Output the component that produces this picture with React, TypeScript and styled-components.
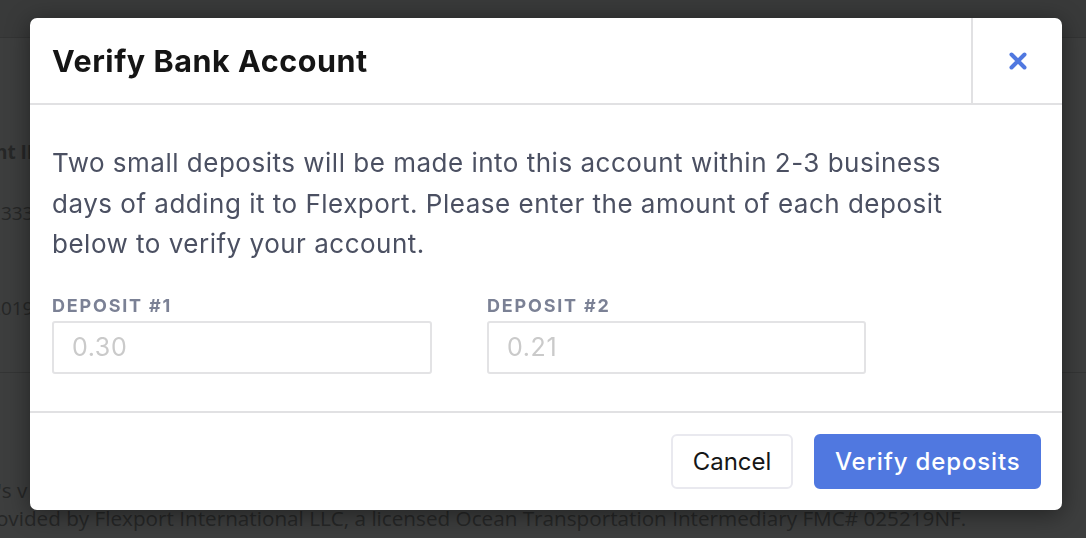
import React from "react"
import styled, { createGlobalStyle } from "styled-components"

const GlobalStyle = createGlobalStyle`
  html, body {
    margin: 0;
    padding: 0;
    height: 100%;
    background: #3d3e3e;
    font-family: Inter, "Noto Sans", sans-serif;
    overflow: hidden;
  }
  * { box-sizing: border-box; }
`

const blue = "#5078e0"

// faded page behind the dialog
const Page = styled.div`
  height: 538px;
  display: flex;
  flex-direction: column;
  color: #262727;
  font-family: "Open Sans", sans-serif;
`
const PageTop = styled.div`
  height: 38px;
  flex-shrink: 0;
  background: #393a3a;
  border-bottom: 1px solid #333434;
`
const Spacer = styled.div<{ height: number }>`
  height: ${p => p.height}px;
  flex-shrink: 0;
`
const PageRow = styled.div<{ bold?: boolean; height: number; shift: number }>`
  height: ${p => p.height}px;
  flex-shrink: 0;
  display: flex;
  align-items: center;
  margin-left: ${p => -p.shift}px;
  font-size: 19px;
  font-weight: ${p => (p.bold ? 700 : 400)};
  white-space: nowrap;
`
const PageRule = styled.div`
  height: 1px;
  flex-shrink: 0;
  background: #343535;
`
const Legal = styled.div<{ shift: number }>`
  margin-left: ${p => -p.shift}px;
  font-size: 20.7px;
  line-height: 28px;
  white-space: nowrap;
`

const Overlay = styled.div`
  position: fixed;
  inset: 0;
  display: flex;
  align-items: flex-start;
  padding: 18px 0 0 30px;
`
const Modal = styled.div`
  width: 1032px;
  height: 492px;
  background: #fff;
  border-radius: 7px;
  box-shadow: 0 4px 24px rgba(0, 0, 0, 0.45);
  display: flex;
  flex-direction: column;
  overflow: hidden;
`
const Header = styled.div`
  height: 87px;
  flex-shrink: 0;
  display: flex;
  border-bottom: 2px solid #e1e1e3;
`
const Title = styled.h1`
  flex: 1;
  margin: 0;
  padding: 0 22px;
  display: flex;
  align-items: center;
  font-size: 30.5px;
  font-weight: 700;
  color: #151515;
  letter-spacing: 0.55px;
`
const Close = styled.button`
  width: 91px;
  border: none;
  border-left: 2px solid #e1e1e3;
  background: none;
  display: flex;
  align-items: center;
  justify-content: center;
  padding: 0;
  cursor: pointer;
`
const Body = styled.div`
  flex: 1;
  padding: 38px 22px 0;
  border-bottom: 2px solid #e1e1e3;
`
const Intro = styled.p`
  margin: 0;
  max-width: 940px;
  font-size: 26px;
  letter-spacing: 0.5px;
  line-height: 40.5px;
  color: #4b5062;
`
const Fields = styled.div`
  display: grid;
  grid-template-columns: 380px 379px;
  column-gap: 55px;
  margin-top: 30px;
`
const Field = styled.label`
  display: flex;
  flex-direction: column;
  gap: 4px;
`
const Label = styled.span`
  font-size: 18px;
  font-weight: 700;
  letter-spacing: 1.8px;
  text-transform: uppercase;
  color: #7b8195;
  line-height: 22px;
`
const Input = styled.input`
  height: 53px;
  border: 2px solid #e3e3e5;
  border-radius: 3px;
  padding: 0 18px;
  font-family: Inter, sans-serif;
  font-size: 25px;
  letter-spacing: 0.6px;
  color: #333;
  outline: none;
  &::placeholder {
    color: #cacaca;
  }
`
const Footer = styled.div`
  height: 97px;
  flex-shrink: 0;
  display: flex;
  justify-content: flex-end;
  align-items: center;
  gap: 21px;
  padding: 0 21px;
`
const Button = styled.button<{ primary?: boolean }>`
  height: 55px;
  padding: 0 ${p => (p.primary ? 18.5 : 20)}px;
  border-radius: 6px;
  font-family: Inter, sans-serif;
  font-size: 24px;
  letter-spacing: ${p => (p.primary ? 0.85 : 0)}px;
  font-weight: ${p => (p.primary ? 500 : 400)};
  border: 2px solid ${p => (p.primary ? blue : "#e9e9ef")};
  background: ${p => (p.primary ? blue : "#fff")};
  color: ${p => (p.primary ? "#fff" : "#161616")};
  cursor: pointer;
`

export default function App() {
  return (
    <>
      <GlobalStyle />
      <Page>
        <PageTop />
        <Spacer height={81} />
        <PageRow height={66} shift={62} bold>
          Account ID
        </PageRow>
        <PageRow height={56} shift={22}>
          A1333
        </PageRow>
        <Spacer height={45} />
        <PageRow height={44} shift={22}>
          A2019
        </PageRow>
        <Spacer height={42} />
        <PageRule />
        <Spacer height={103} />
        <Legal shift={16}>It's v</Legal>
        <Legal shift={25}>
          Provided by Flexport International LLC, a licensed Ocean Transportation Intermediary FMC# 025219NF.
        </Legal>
      </Page>
      <Overlay>
        <Modal>
          <Header>
            <Title>Verify Bank Account</Title>
            <Close aria-label="Close">
              <svg width="20" height="20" viewBox="0 0 20 20">
                <path
                  d="M3.5 3.5 L16.5 16.5 M16.5 3.5 L3.5 16.5"
                  stroke={blue}
                  strokeWidth="4"
                  strokeLinecap="round"
                />
              </svg>
            </Close>
          </Header>
          <Body>
            <Intro>
              Two small deposits will be made into this account within 2-3 business days of adding it to
              Flexport. Please enter the amount of each deposit below to verify your account.
            </Intro>
            <Fields>
              <Field>
                <Label>Deposit #1</Label>
                <Input placeholder="0.30" />
              </Field>
              <Field>
                <Label>Deposit #2</Label>
                <Input placeholder="0.21" />
              </Field>
            </Fields>
          </Body>
          <Footer>
            <Button>Cancel</Button>
            <Button primary>Verify deposits</Button>
          </Footer>
        </Modal>
      </Overlay>
    </>
  )
}
